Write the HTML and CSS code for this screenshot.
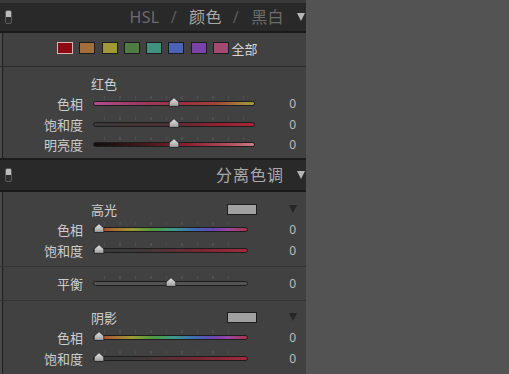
FILE: index.html
```html
<!DOCTYPE html>
<html lang="zh">
<head>
<meta charset="utf-8">
<title>HSL / 分离色调</title>
<link rel="stylesheet" href="styles.css">
</head>
<body>
<svg width="0" height="0" class="defs" aria-hidden="true">
  <defs>
    <linearGradient id="tg" x1="0" y1="0" x2="0" y2="1">
      <stop offset="0" stop-color="#e8e8e8"/>
      <stop offset="1" stop-color="#9c9c9c"/>
    </linearGradient>
    <symbol id="thumb" viewBox="0 0 11 10">
      <path d="M5.5 .6 L10.4 5 V9.4 H.6 V5 Z" fill="url(#tg)" stroke="#262626" stroke-width="1" stroke-linejoin="round"/>
    </symbol>
  </defs>
</svg>
<div class="panel">
  <div class="topstrip"></div>

  <div class="header">
    <span class="toggle"></span>
    <div class="tabs tabs-hsl">
      <span class="tab dim">HSL</span><span class="sep">/</span><span class="tab on">颜色</span><span class="sep">/</span><span class="tab dim">黑白</span>
    </div>
    <span class="arrow"></span>
  </div>

  <div class="body body-hsl">
    <div class="swatches">
      <span class="sw sw-red sel"></span>
      <span class="sw sw-orange"></span>
      <span class="sw sw-yellow"></span>
      <span class="sw sw-green"></span>
      <span class="sw sw-aqua"></span>
      <span class="sw sw-blue"></span>
      <span class="sw sw-purple"></span>
      <span class="sw sw-magenta"></span>
      <span class="all">全部</span>
    </div>
    <div class="grid grid-hsl">
      <div class="title">红色</div>

      <span class="lbl">色相</span>
      <div class="track t-hue-red"><div class="rail"><svg class="thumb" style="left:50%"><use href="#thumb"/></svg></div></div>
      <span class="val">0</span>

      <span class="lbl">饱和度</span>
      <div class="track t-sat-red"><div class="rail"><svg class="thumb" style="left:50%"><use href="#thumb"/></svg></div></div>
      <span class="val">0</span>

      <span class="lbl">明亮度</span>
      <div class="track t-lum-red"><div class="rail"><svg class="thumb" style="left:50%"><use href="#thumb"/></svg></div></div>
      <span class="val">0</span>
    </div>
  </div>

  <div class="header header-2">
    <span class="toggle"></span>
    <div class="tabs">
      <span class="tab on">分离色调</span>
    </div>
    <span class="arrow"></span>
  </div>

  <div class="body body-split">
    <div class="group">
      <div class="grid grid-split">
        <div class="head">
          <span class="title-text">高光</span>
          <span class="chip"></span>
          <span class="mini-arrow"></span>
        </div>

        <span class="lbl">色相</span>
        <div class="track t-spectrum"><div class="rail"><svg class="thumb" style="left:0%"><use href="#thumb"/></svg></div></div>
        <span class="val">0</span>

        <span class="lbl">饱和度</span>
        <div class="track t-sat"><div class="rail"><svg class="thumb" style="left:0%"><use href="#thumb"/></svg></div></div>
        <span class="val">0</span>
      </div>
    </div>

    <div class="group group-balance">
      <div class="grid grid-split">
        <span class="lbl">平衡</span>
        <div class="track t-grey"><div class="rail"><svg class="thumb" style="left:50%"><use href="#thumb"/></svg></div></div>
        <span class="val">0</span>
      </div>
    </div>

    <div class="group group-shadow">
      <div class="grid grid-split">
        <div class="head">
          <span class="title-text">阴影</span>
          <span class="chip"></span>
          <span class="mini-arrow"></span>
        </div>

        <span class="lbl">色相</span>
        <div class="track t-spectrum"><div class="rail"><svg class="thumb" style="left:0%"><use href="#thumb"/></svg></div></div>
        <span class="val">0</span>

        <span class="lbl">饱和度</span>
        <div class="track t-sat"><div class="rail"><svg class="thumb" style="left:0%"><use href="#thumb"/></svg></div></div>
        <span class="val">0</span>
      </div>
    </div>
  </div>
</div>
</body>
</html>
```

FILE: styles.css
```css
* { box-sizing: border-box; margin: 0; padding: 0; }

html, body { height: 100%; }

body {
  background: #535353;
  font-family: "Noto Sans", "Noto Sans CJK SC", sans-serif;
  overflow: hidden;
}

.defs { position: absolute; }

.panel {
  width: 306px;
  height: 374px;
  background: #414141;
  display: flex;
  flex-direction: column;
  overflow: hidden;
  box-shadow: inset -1px 0 0 #383838;
}

.topstrip {
  flex: none;
  height: 3px;
  background: #3a3a3a;
}

/* ---------- headers ---------- */
.header {
  flex: none;
  height: 30px;
  background: #292929;
  border-bottom: 2px solid #1a1a1a;
  display: flex;
  align-items: center;
  padding-left: 5px;
}

.header-2 {
  height: 34px;
  border-top: 2px solid #1c1c1c;
}

.toggle {
  width: 7px;
  height: 14px;
  border: 1px solid #5a5a5a;
  border-radius: 2px;
  background: linear-gradient(#bdbdbd 0 50%, #2e2e2e 50% 100%);
}

.tabs {
  margin-left: auto;
  display: flex;
  align-items: center;
  font-size: 16px;
  line-height: 20px;
  letter-spacing: 1px;
}

.tabs-hsl { letter-spacing: 0.4px; }

.tab.dim { color: #6c6c6c; }
.tab.on { color: #a9a9a9; }

.sep {
  color: #5c5c5c;
  margin: 0 12px 0 11px;
}

.arrow {
  width: 0;
  height: 0;
  margin-left: 13px;
  margin-right: 1px;
  border-left: 4px solid transparent;
  border-right: 4px solid transparent;
  border-top: 8px solid #b4b4b4;
}

/* ---------- bodies ---------- */
.body {
  background: #414141;
  box-shadow: inset 2px 0 0 #4a4a4a, inset 3px 0 0 #1f1f1f;
}

.body-hsl {
  flex: none;
  height: 125px;
}

.body-split {
  flex: 1;
}

.swatches {
  height: 34px;
  border-bottom: 1px solid #2c2c2c;
  display: flex;
  align-items: center;
  gap: 6.3px;
  padding-left: 57px;
  padding-bottom: 3px;
}

.sw {
  width: 16px;
  height: 12px;
  border: 1px solid #1c1c1c;
}

.sw.sel { border-color: #d9b4b4; }

.sw-red     { background: #8c0a12; }
.sw-orange  { background: #a26e3e; }
.sw-yellow  { background: #a29a3a; }
.sw-green   { background: #4f7c40; }
.sw-aqua    { background: #3f9180; }
.sw-blue    { background: #4b62b6; }
.sw-purple  { background: #7942a6; }
.sw-magenta { background: #a44a72; }

.all {
  margin-left: -4px;
  font-size: 13px;
  color: #d6d6d6;
}

/* ---------- slider grids ---------- */
.grid {
  display: grid;
  column-gap: 10px;
  grid-auto-rows: 20.5px;
  align-items: center;
}

.grid-hsl {
  grid-template-columns: 83px 162px 1fr;
  padding: 6px 10px 0 0;
}

.grid-split {
  grid-template-columns: 83px 155px 1fr;
  padding-right: 10px;
}

.title {
  grid-column: 2 / 4;
  font-size: 13px;
  color: #cfcfcf;
  margin-left: -2px;
}

.lbl {
  grid-column: 1;
  justify-self: end;
  font-size: 13px;
  color: #cdcdcd;
  white-space: nowrap;
}

.val {
  justify-self: end;
  font-size: 12px;
  color: #bcbcbc;
}

.track {
  position: relative;
  height: 5px;
  border: 1px solid #1d1d1d;
  border-radius: 3px;
}

.track::before {
  content: "";
  position: absolute;
  left: 10px;
  right: 10px;
  top: -6px;
  height: 3px;
  background: repeating-linear-gradient(to right, #4e4e4e 0 1px, transparent 1px 15.5px);
}

.rail {
  position: absolute;
  top: 0;
  bottom: 0;
  left: 5px;
  right: 5px;
}

.thumb {
  position: absolute;
  top: -5px;
  width: 11px;
  height: 10px;
  transform: translateX(-50%);
  overflow: visible;
}

.t-hue-red {
  background: linear-gradient(to right, #b04c8e 0%, #9e3a62 28%, #9a3044 55%, #9e4438 76%, #a2803a 92%, #9c9a3c 100%);
}

.t-sat-red {
  background: linear-gradient(to right, #3a3a3a 0%, #4a3034 45%, #8e2232 75%, #a8263a 100%);
}

.t-lum-red {
  background: linear-gradient(to right, #0e0e0e 0%, #4a1a20 35%, #8c2232 60%, #b0505e 85%, #c47e88 100%);
}

.t-spectrum {
  background: linear-gradient(to right, #a8343a 0%, #a86a34 12%, #9c9a34 25%, #4f9a3c 38%, #3c9a8a 52%, #3f6ab4 66%, #6a46b0 78%, #9c44a0 88%, #a83448 100%);
}

.t-sat {
  background: linear-gradient(to right, #3a3a3a 0%, #3c3a3a 30%, #7a2634 70%, #a22a3c 100%);
}

.t-grey {
  background: #545454;
}

/* ---------- split groups ---------- */
.group {
  border-top: 1px solid #343434;
}

.body-split .group:first-child {
  border-top: none;
  padding: 7px 0 5px;
}

.group-balance {
  padding: 7px 0 6px;
}

.group-shadow {
  padding-top: 6px;
}

.head {
  grid-column: 2 / 4;
  display: flex;
  align-items: center;
}

.title-text {
  font-size: 13px;
  color: #cfcfcf;
  margin-left: -2px;
}

.chip {
  margin-left: auto;
  width: 30px;
  height: 11px;
  background: #a1a1a1;
  border: 1px solid #1d1d1d;
}

.mini-arrow {
  margin-left: 32px;
  margin-right: -1px;
  width: 0;
  height: 0;
  border-left: 4px solid transparent;
  border-right: 4px solid transparent;
  border-top: 8px solid #262626;
}
```
